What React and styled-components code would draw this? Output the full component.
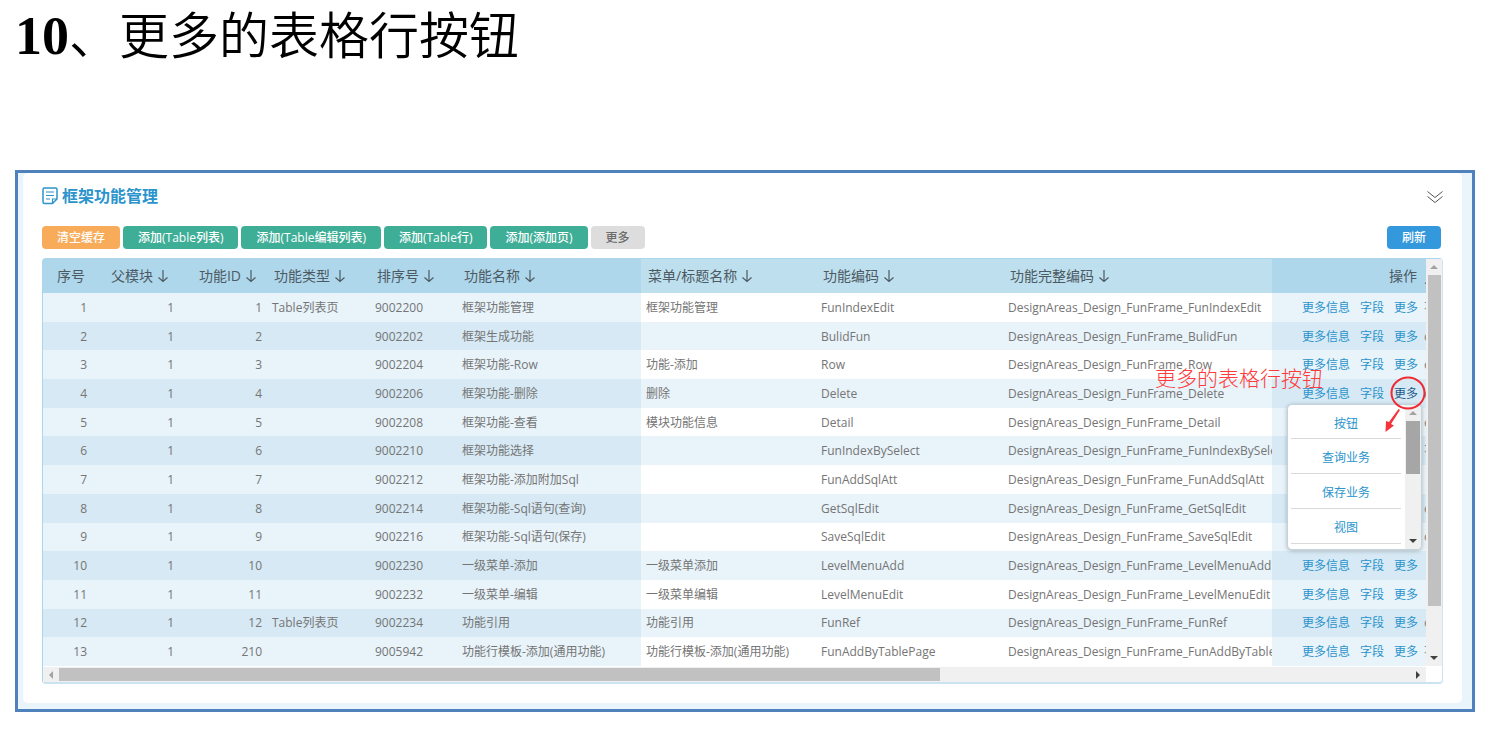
import React from 'react';
import styled, { createGlobalStyle, css } from 'styled-components';

const latin = `"Open Sans", "Noto Sans CJK SC", sans-serif`;

const Global = createGlobalStyle`
  *, *::before, *::after { box-sizing: border-box; }
  body { margin: 0; background: #fff; font-family: ${latin}; font-size: 12px; color: #757575; }
  button { font-family: inherit; }
`;

const Page = styled.main`
  padding: 0 18px 16px 15px;
`;

const Heading = styled.h1`
  margin: 0 0 98px;
  height: 72px;
  line-height: 72px;
  font-family: "Liberation Serif", "Noto Sans CJK SC", serif;
  font-size: 50px;
  font-weight: 350;
  color: #000;
  white-space: nowrap;
`;

const HeadingNumber = styled.span`
  font-size: 54px;
  font-weight: 700;
`;

const Frame = styled.section`
  border: 3px solid #4f81bd;
  background: #eaf4fb;
  padding: 0 10px 6px 5px;
`;

const Panel = styled.div`
  background: #fff;
  border-radius: 5px;
  padding: 11px 19px 19px;
`;

const PanelHead = styled.header`
  display: flex;
  align-items: center;
  justify-content: space-between;
  height: 24px;
`;

const PanelTitle = styled.h2`
  display: flex;
  align-items: center;
  gap: 4px;
  margin: 0;
  font-size: 16px;
  font-weight: 700;
  line-height: 24px;
  color: #2b94cc;
`;

const IconButton = styled.button`
  display: flex;
  padding: 2px 0 0;
  border: 0;
  background: none;
`;

const Toolbar = styled.div`
  display: flex;
  gap: 3px;
  margin: 18px 2px 9px 0;
`;

const tones = {
  orange: css`background: #f8ab59; color: #fff;`,
  green: css`background: #3fae97; color: #fff;`,
  grey: css`background: #ddd; color: #6b6b6b;`,
  blue: css`background: #3398dc; color: #fff; margin-left: auto;`,
};

const Button = styled.button`
  height: 23px;
  padding: 0 15px;
  border: 0;
  border-radius: 4px;
  font-size: 12px;
  font-weight: 500;
  line-height: 23px;
  white-space: nowrap;
  ${({ $tone }) => tones[$tone]}
`;

const Grid = styled.div`
  display: grid;
  grid-template-columns: minmax(0, 1fr) 16px;
  border: 1px solid #a9d6ec;
  border-right-color: #cbe4f1;
  border-bottom: 2px solid #cbe4f1;
  border-radius: 4px;
`;

const Table = styled.table`
  width: 100%;
  height: 407px;
  table-layout: fixed;
  border-collapse: collapse;
`;

const Col = styled.col`
  width: ${({ $w }) => ($w ? `${$w}px` : 'auto')};
`;

const Th = styled.th`
  height: 34px;
  padding: 0 ${({ $sorted }) => ($sorted ? '10px' : '7px')} 0 ${({ $start }) => ($start ? '7px' : '0')};
  overflow: hidden;
  white-space: nowrap;
  font-size: 14px;
  font-weight: 400;
  color: #4c5a63;
  text-align: ${({ $start }) => ($start ? 'left' : 'right')};
  background: ${({ $pinned }) => ($pinned ? '#afd7ec' : '#bedfee')};
`;

const EdgeHead = styled(Th)`
  padding: 0;
`;

const HeadLabel = styled.span`
  display: inline-flex;
  align-items: center;
  gap: 4px;
  line-height: 20px;
`;

const Td = styled.td`
  padding: 1px 5px 0;
  overflow: hidden;
  white-space: nowrap;
  line-height: 20px;
  text-align: ${({ $start }) => ($start ? 'left' : 'right')};
`;

const Row = styled.tr`
  ${Td} {
    background: #fff;
  }
  ${Td}[data-pinned] {
    background: #e8f3fa;
  }
  &:nth-child(even) ${Td} {
    background: #e8f3fa;
  }
  &:nth-child(even) ${Td}[data-pinned] {
    background: #d6e9f4;
  }
`;

const ActionCell = styled(Td)`
  overflow: visible;
  padding: 1px 6px 0 0;
`;

const EdgeCell = styled(Td)`
  padding: 1px 0 0;
  color: #888;
`;

const Actions = styled.div`
  position: relative;
  display: flex;
  justify-content: flex-end;
  gap: 10px;
  visibility: ${({ $covered }) => ($covered ? 'hidden' : 'visible')};
`;

const Link = styled.a`
  color: ${({ $active }) => ($active ? '#1d5a8a' : '#2b94cc')};
  text-decoration: none;
`;

const VBar = styled.div`
  display: flex;
  flex-direction: column;
  width: ${({ $w }) => $w}px;
  background: #f0f0f0;
`;

const HBar = styled.div`
  display: flex;
  height: 15px;
  margin-top: 1px;
  background: #f0f0f0;
`;

const BarArrow = styled.span`
  display: flex;
  flex: none;
  align-items: center;
  justify-content: center;
  width: 16px;
  height: 16px;
`;

const VThumb = styled.span`
  height: ${({ $h }) => $h}px;
  margin: 0 1px 0 ${({ $inset }) => $inset}px;
  background: ${({ $dark }) => ($dark ? '#a6a6a6' : '#c1c1c1')};
`;

const HThumb = styled.span`
  flex: 15;
  margin: 1px 0;
  background: #c1c1c1;
`;

const Spacer = styled.span`
  flex: 8;
`;

const Menu = styled.div`
  position: absolute;
  z-index: 2;
  top: 20px;
  right: -4px;
  display: flex;
  width: 135px;
  height: 146px;
  border: 1px solid #c3d3dc;
  border-radius: 5px;
  background: #fff;
  box-shadow: 0 1px 4px rgba(0, 0, 0, 0.25);
  overflow: hidden;
`;

const MenuList = styled.ul`
  flex: 1;
  margin: 0;
  padding: 0 4px 0 3px;
  list-style: none;
`;

const MenuItem = styled.li`
  height: 35px;
  line-height: 37px;
  text-align: center;
  border-bottom: 1px solid #d9d9d9;
  &:first-child { height: 34px; }
`;

const Note = styled.span`
  position: absolute;
  z-index: 3;
  top: -20px;
  right: 95px;
  font-size: 21px;
  font-weight: 300;
  line-height: 28px;
  color: #ff3b3b;
`;

const Marker = styled.svg`
  position: absolute;
  z-index: 4;
  top: -8px;
  right: -13px;
`;

const columns = [
  { w: 49, label: '序号', pinned: true },
  { w: 87, label: '父模块', sort: true, pinned: true },
  { w: 88, label: '功能ID', sort: true, pinned: true },
  { w: 103, label: '功能类型', sort: true, pinned: true, start: true },
  { w: 87, label: '排序号', sort: true, pinned: true, start: true },
  { w: 184, label: '功能名称', sort: true, pinned: true, start: true },
  { w: 175, label: '菜单/标题名称', sort: true, start: true },
  { w: 187, label: '功能编码', sort: true, start: true },
  { label: '功能完整编码', sort: true, start: true },
  { w: 152, label: '操作', pinned: true },
];

const P = 'DesignAreas_Design_FunFrame_';
const rows = [
  [1, 1, 1, 'Table列表页', 9002200, '框架功能管理', '框架功能管理', 'FunIndexEdit', 'FunIndexEdit'],
  [2, 1, 2, '', 9002202, '框架生成功能', '', 'BulidFun', 'BulidFun'],
  [3, 1, 3, '', 9002204, '框架功能-Row', '功能-添加', 'Row', 'Row'],
  [4, 1, 4, '', 9002206, '框架功能-删除', '删除', 'Delete', 'Delete'],
  [5, 1, 5, '', 9002208, '框架功能-查看', '模块功能信息', 'Detail', 'Detail'],
  [6, 1, 6, '', 9002210, '框架功能选择', '', 'FunIndexBySelect', 'FunIndexBySelect'],
  [7, 1, 7, '', 9002212, '框架功能-添加附加Sql', '', 'FunAddSqlAtt', 'FunAddSqlAtt'],
  [8, 1, 8, '', 9002214, '框架功能-Sql语句(查询)', '', 'GetSqlEdit', 'GetSqlEdit'],
  [9, 1, 9, '', 9002216, '框架功能-Sql语句(保存)', '', 'SaveSqlEdit', 'SaveSqlEdit'],
  [10, 1, 10, '', 9002230, '一级菜单-添加', '一级菜单添加', 'LevelMenuAdd', 'LevelMenuAdd'],
  [11, 1, 11, '', 9002232, '一级菜单-编辑', '一级菜单编辑', 'LevelMenuEdit', 'LevelMenuEdit'],
  [12, 1, 12, 'Table列表页', 9002234, '功能引用', '功能引用', 'FunRef', 'FunRef'],
  [13, 1, 210, '', 9005942, '功能行模板-添加(通用功能)', '功能行模板-添加(通用功能)', 'FunAddByTablePage', 'FunAddByTablePage'],
];
const edge = ['不', 'e', 'e', 'e', 'e', '不', '', 'e', 'e', '', '', 'e', '不'];

const openRow = 3;
const menuSpan = 5;

const triangles = {
  up: 'M4 10 8 6l4 4z',
  down: 'M4 6l4 4 4-4z',
  left: 'M10 4 6 8l4 4z',
  right: 'M6 4l4 4-4 4z',
};

function Arrow({ dir, color }) {
  return (
    <BarArrow>
      <svg width="16" height="16" viewBox="0 0 16 16" aria-hidden="true">
        <path d={triangles[dir]} fill={color} />
      </svg>
    </BarArrow>
  );
}

function SortIcon() {
  return (
    <svg width="12" height="14" viewBox="0 0 12 14" fill="none" stroke="#4c5a63" strokeWidth="1.2" aria-hidden="true">
      <path d="M6 1v11.500M1.500 8.500 6 12.500 10.500 8.500" />
    </svg>
  );
}

function RowMenu() {
  return (
    <>
      <Menu>
        <MenuList>
          {['按钮', '查询业务', '保存业务', '视图'].map((t) => (
            <MenuItem key={t}><Link href="#">{t}</Link></MenuItem>
          ))}
        </MenuList>
        <VBar $w={16}>
          <Arrow dir="up" color="#a3a3a3" />
          <VThumb $h={53} $inset={1} $dark />
          <Spacer />
          <Arrow dir="down" color="#404040" />
        </VBar>
      </Menu>
      <Note>更多的表格行按钮</Note>
      <Marker width="46" height="60" viewBox="0 0 46 60" fill="none" aria-hidden="true">
        <ellipse cx="23" cy="17" rx="16.500" ry="15.500" stroke="#ee2a33" strokeWidth="2" />
        <path d="M15 34 13.500 33 4 46 1 45 .500 56 9 49.500 6 48z" fill="#f5333a" />
      </Marker>
    </>
  );
}

export default function App() {
  return (
    <Page>
      <Global />
      <Heading><HeadingNumber>10</HeadingNumber>、更多的表格行按钮</Heading>
      <Frame>
        <Panel>
          <PanelHead>
            <PanelTitle>
              <svg width="16" height="18" viewBox="0 0 16 18" fill="none" stroke="#2b94cc" aria-hidden="true">
                <path d="M10.500 16.500H2.500a1.500 1.500 0 0 1-1.500-1.500V2.500A1.500 1.500 0 0 1 2.500 1h11A1.500 1.500 0 0 1 15 2.500V12z" strokeWidth="1.500" />
                <path d="M10.500 16.500V12H15M4 5h8M4 8.500h8M4 12h4" strokeWidth="1.200" />
              </svg>
              框架功能管理
            </PanelTitle>
            <IconButton type="button" aria-label="收起">
              <svg width="16" height="14" viewBox="0 0 16 14" fill="none" stroke="#555" aria-hidden="true">
                <path d="M0.500 1.500 8 7.500l7.500-6M0.500 6.500 8 12.500l7.500-6" />
              </svg>
            </IconButton>
          </PanelHead>
          <Toolbar>
            <Button type="button" $tone="orange">清空缓存</Button>
            <Button type="button" $tone="green">添加(Table列表)</Button>
            <Button type="button" $tone="green">添加(Table编辑列表)</Button>
            <Button type="button" $tone="green">添加(Table行)</Button>
            <Button type="button" $tone="green">添加(添加页)</Button>
            <Button type="button" $tone="grey">更多</Button>
            <Button type="button" $tone="blue">刷新</Button>
          </Toolbar>
          <Grid>
            <Table>
              <colgroup>
                {columns.map((c) => <Col key={c.label} $w={c.w} />)}
                <Col $w={2} />
              </colgroup>
              <thead>
                <tr>
                  {columns.map((c) => (
                    <Th key={c.label} $start={c.start} $pinned={c.pinned} $sorted={c.sort}>
                      <HeadLabel>{c.label}{c.sort && <SortIcon />}</HeadLabel>
                    </Th>
                  ))}
                  <EdgeHead $start $pinned>贝</EdgeHead>
                </tr>
              </thead>
              <tbody>
                {rows.map((r, i) => (
                  <Row key={r[0]}>
                    {r.map((v, j) => (
                      <Td key={j} $start={j > 2} data-pinned={j < 6 ? '' : undefined}>
                        {j === 8 ? P + v : v}
                      </Td>
                    ))}
                    <ActionCell data-pinned="">
                      <Actions $covered={i > openRow && i <= openRow + menuSpan}>
                        <Link href="#">更多信息</Link>
                        <Link href="#">字段</Link>
                        <Link href="#" $active={i === openRow}>更多</Link>
                        {i === openRow && <RowMenu />}
                      </Actions>
                    </ActionCell>
                    <EdgeCell $start data-pinned="">{edge[i]}</EdgeCell>
                  </Row>
                ))}
              </tbody>
            </Table>
            <VBar $w={16}>
              <Arrow dir="up" color="#a3a3a3" />
              <VThumb $h={331} $inset={2} />
              <Spacer />
              <Arrow dir="down" color="#404040" />
            </VBar>
            <HBar>
              <Arrow dir="left" color="#a3a3a3" />
              <HThumb />
              <Spacer />
              <Arrow dir="right" color="#404040" />
            </HBar>
          </Grid>
        </Panel>
      </Frame>
    </Page>
  );
}
